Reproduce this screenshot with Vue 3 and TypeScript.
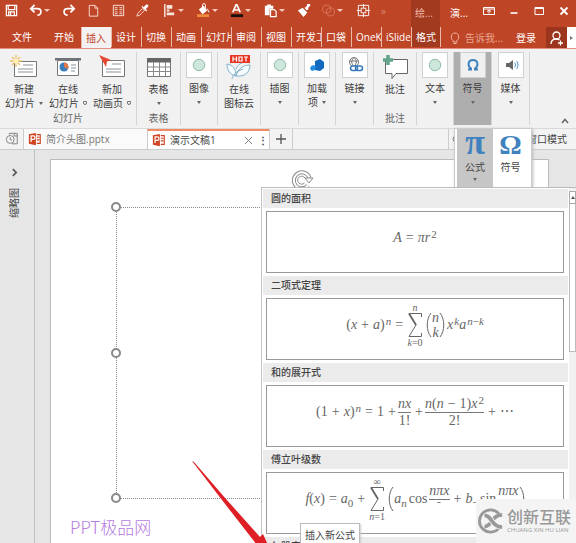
<script setup lang="ts">
interface QuickAction {
  icon: string
  label: string
  width: number
  caret?: boolean
}

interface RibbonButton {
  icon: string
  lines: string[]
  mark?: 'solid' | 'hollow'
  boxed?: boolean
}

interface RibbonGroup {
  width: number
  label?: string
  active?: boolean
  buttons: RibbonButton[]
}

const quickActions: QuickAction[] = [
  { icon: 'save', label: '保存', width: 23 },
  { icon: 'undo', label: '撤消', width: 34, caret: true },
  { icon: 'redo', label: '恢复', width: 24 },
  { icon: 'page', label: '新建', width: 25 },
  { icon: 'grid', label: '网格', width: 24 },
  { icon: 'dropper', label: '取色器', width: 27 },
  { icon: 'align', label: '对齐', width: 34, caret: true },
  { icon: 'fill', label: '填充', width: 33, caret: true },
  { icon: 'font', label: '字体颜色', width: 34, caret: true },
  { icon: 'paste', label: '粘贴', width: 34, caret: true },
  { icon: 'brush', label: '格式刷', width: 24 },
  { icon: 'merge', label: '合并形状', width: 35, caret: true },
  { icon: 'select', label: '选择', width: 24 },
]

const tabs = ['插入', '设计', '切换', '动画', '幻灯片', '审阅', '视图', '开发工', '口袋', 'OneKey', 'iSlide']

const groups: RibbonGroup[] = [
  {
    width: 137,
    label: '幻灯片',
    buttons: [
      { icon: 'new-slide', lines: ['新建', '幻灯片'], mark: 'solid' },
      { icon: 'online-slide', lines: ['在线', '幻灯片'], mark: 'hollow' },
      { icon: 'anim-slide', lines: ['新加', '动画页'], mark: 'hollow' },
    ],
  },
  { width: 44, label: '表格', buttons: [{ icon: 'table', lines: ['表格', ''], mark: 'solid' }] },
  { width: 37, buttons: [{ icon: 'dot', lines: ['图像', ''], mark: 'solid', boxed: true }] },
  { width: 43, buttons: [{ icon: 'hot-leaf', lines: ['在线', '图标云'] }] },
  { width: 38, buttons: [{ icon: 'dot', lines: ['插图', ''], mark: 'solid', boxed: true }] },
  { width: 37, buttons: [{ icon: 'addin', lines: ['加载', '项'], mark: 'solid', boxed: true }] },
  { width: 38, buttons: [{ icon: 'link', lines: ['链接', ''], mark: 'solid', boxed: true }] },
  { width: 43, label: '批注', buttons: [{ icon: 'comment', lines: ['批注', ''] }] },
  { width: 37, buttons: [{ icon: 'dot', lines: ['文本', ''], mark: 'solid', boxed: true }] },
  { width: 38, active: true, buttons: [{ icon: 'omega', lines: ['符号', ''], mark: 'solid', boxed: true }] },
  { width: 38, buttons: [{ icon: 'media', lines: ['媒体', ''], mark: 'solid', boxed: true }] },
]
</script>

<template>
  <div class="app">
    <svg class="sprite" aria-hidden="true">
      <symbol id="save" viewBox="0 0 16 16"><path d="M2.500 2.500h11v11h-11z M4.500 3v4h7V3 M5 13v-3.500h6V13 M7 10v3" fill="none" stroke="#fff" stroke-width="1.300" /></symbol>
      <symbol id="undo" viewBox="0 0 16 16"><path d="M7 2 3 6l4 4M3.500 6H10c5 0 5 7 0 7" fill="none" stroke="#fff" stroke-width="1.900" /></symbol>
      <symbol id="redo" viewBox="0 0 16 16"><path d="M9 2l4 4-4 4M12.500 6H6c-5 0-5 7 0 7" fill="none" stroke="#fff" stroke-width="1.900" /></symbol>
      <symbol id="page" viewBox="0 0 16 16"><path d="M3.500 2.500h6l3 3v8.500h-9zM9.500 2.500v3h3" fill="none" stroke="#f6ddd4" /></symbol>
      <symbol id="grid" viewBox="0 0 16 16"><path d="M2.500 2.500h11v11h-11z" fill="none" stroke="#f9e5de" /><path d="M4 5h3M9 5h3M4 7h3M9 7h3M4 9.500h3M9 9.500h3M4 11.500h3M9 11.500h3" stroke="#f6ddd4" /></symbol>
      <symbol id="dropper" viewBox="0 0 16 16"><path d="M2 14l1-3 5-5 2 2-5 5z" fill="none" stroke="#f6ddd4" /><path d="M7 4l5 5 1-1-1.500-1.500L14 4c1-2-1-3-2.500-2L9 4.500 8 3z" fill="#fff" /></symbol>
      <symbol id="align" viewBox="0 0 16 16"><path d="M3 1v14" stroke="#fff" stroke-width="1.300" /><path d="M5 2h6v4H5zM5 7h3v2H5zM5 10h8v3H5z" fill="#f8e4dc" /></symbol>
      <symbol id="fill" viewBox="0 0 16 16"><path d="M3 7l5-4 4 5-5 4z" fill="#fff" /><path d="M7 5V2c0-2 3-2 3 0v4M12 6l2 4" stroke="#fff" fill="none" /><path d="M1 12h13v3H1z" fill="#ee8a3a" /></symbol>
      <symbol id="font" viewBox="0 0 16 16"><path d="M4 10 7.500 2h1L12 10M5.500 7.500h5" fill="none" stroke="#fff" stroke-width="1.700" /><path d="M2 12h13v3H2z" fill="#17110f" /></symbol>
      <symbol id="paste" viewBox="0 0 16 16"><path d="M2 3h9v3H7v7H2zM4.500 1.500h4v2h-4z" fill="#fff" /><path d="M8 7h4l2 2v5.500H8z" fill="#c0472a" stroke="#fff" stroke-width="1.300" /></symbol>
      <symbol id="brush" viewBox="0 0 16 16"><path d="M1 8l5-3 5 5-4 5zM8 5l2-1 1-3 3 0 0 2-2 2 0 2-2 1z" fill="#fff" /><path d="M6 4l6 6" stroke="#c0472a" /></symbol>
      <symbol id="merge" viewBox="0 0 16 16"><circle cx="6" cy="6.500" r="4.300" fill="none" stroke="#d9775f" /><circle cx="10" cy="9.500" r="4.300" fill="none" stroke="#d9775f" /></symbol>
      <symbol id="select" viewBox="0 0 16 16"><path d="M2.500 2.500h11v11h-11zM5.500 5.500h5v5h-5zM8 1v4M8 11v4M1 8h4M11 8h4" fill="none" stroke="#fff" /></symbol>

      <symbol id="new-slide" viewBox="0 0 28 24"><path d="M4.500 6.500h22v15h-22z" fill="#fff" stroke="#777" /><path d="M13 10h10M8 14h15M8 17h15" stroke="#c5c9cc" stroke-width="2" /><path d="M6 0v12M0 6h12M2 2l8 8M10 2l-8 8" stroke="#efc26b" stroke-width="1.300" /><circle cx="6" cy="6" r="2.500" fill="#fff0b5" /></symbol>
      <symbol id="online-slide" viewBox="0 0 28 24"><path d="M3.500 5.500h21v15h-21z" fill="#fff" stroke="#777" /><path d="M1 3h26v2.500H1z" fill="#6f7478" /><circle cx="10" cy="12" r="4.500" fill="#3b7dbd" /><path d="M10 12V7.500a4.500 4.500 0 0 1 4 6.500z" fill="#e57845" /><path d="M17 10h5M17 13h5M17 16h4" stroke="#adb5bb" stroke-width="1.500" /></symbol>
      <symbol id="anim-slide" viewBox="0 0 28 24"><path d="M4.500 5.500h22v16h-22z" fill="#fff" stroke="#777" /><path d="M14 9h9M8 14h15M8 17h15" stroke="#c5c9cc" stroke-width="2" /><path d="M1 0l12 5-4 1.500L8 12z" fill="#e54932" /></symbol>
      <symbol id="table" viewBox="0 0 28 24"><path d="M2.500 3.500h23v18h-23z" fill="#fff" stroke="#777" /><path d="M2 3h24v4.500H2z" fill="#666" /><path d="M8.500 7v14M14.500 7v14M20.500 7v14M3 12h22M3 16.500h22" stroke="#888" /></symbol>
      <symbol id="dot" viewBox="0 0 24 24"><circle cx="12" cy="12" r="5.700" fill="#cde8da" stroke="#91b9aa" /></symbol>
      <symbol id="hot-leaf" viewBox="0 0 28 26"><path d="M2 10c0 6 3 11 9 12 9 1 14-4 14-11-6 0-12 3-14 11C11 15 8 11 2 10zM7 25c1-5 5-8 11-10M11 15c1-3 3-5 6-6" fill="#f7fcff" stroke="#83b1ca" /><path d="M5 1h20v8H5z" fill="#e73524" /><path d="M8 2.500v5M11.500 2.500v5M8 5h3.500M14 3h3v4h-3zM19 3h4M21 3v4.500" fill="none" stroke="#fff" stroke-width="1.200" /></symbol>
      <symbol id="addin" viewBox="0 0 24 24"><path d="M10 8l5-2 4 3v6l-4 3-5-1z" fill="#1269be" /><path d="M6 13l3-1 2 2-1 3-3 1-2-2z" fill="#238be0" /></symbol>
      <symbol id="link" viewBox="0 0 24 24"><circle cx="11" cy="9" r="4.500" fill="none" stroke="#777" /><path d="M7 8h8M11 4.500c-3 3-3 6 0 9 3-3 3-6 0-9" fill="none" stroke="#777" /><rect x="7.500" y="13" width="7" height="4.500" rx="2.200" fill="#fff" stroke="#3478b9" stroke-width="1.500" /><rect x="12.500" y="13" width="7" height="4.500" rx="2.200" fill="none" stroke="#3478b9" stroke-width="1.500" /></symbol>
      <symbol id="comment" viewBox="0 0 28 26"><path d="M4.500 5.500h22v14H15l-4 5v-5H4.500z" fill="#fff" stroke="#666" /><path d="M7 1v10M2 6h10" stroke="#61a489" stroke-width="3.500" /></symbol>
      <symbol id="omega" viewBox="0 0 24 24"><path d="M7 16.500h3v-1C6 12.500 7 7 12 7s6 5.500 2 8.500v1h3" fill="none" stroke="#3b80bb" stroke-width="1.900" /></symbol>
      <symbol id="media" viewBox="0 0 24 24"><path d="M7 10h3l4-3v10l-4-3H7z" fill="#666" /><path d="M15.500 9.500c1.300 1.500 1.300 3.500 0 5M17.500 8c2 2.500 2 5.500 0 8" fill="none" stroke="#4d8fc7" /></symbol>

      <symbol id="ppt" viewBox="0 0 16 16"><path d="M1 2.500 9 1v14l-8-1.500z" fill="#d04423" /><path d="M10 3h4v10h-4M10 6h3M10 9h3" fill="none" stroke="#d04423" stroke-width="1.300" /><path d="M3.500 11.500v-7H6a2 2 0 0 1 0 4H3.500" fill="none" stroke="#fff" stroke-width="1.400" /></symbol>
      <symbol id="sigma" viewBox="0 0 16 26"><path d="M14.500 5V1.500H2L9 13 2 24.500h12.500V21" fill="none" stroke="#666" /><path d="M2 1.500 9 13" stroke="#666" stroke-width="1.800" /></symbol>
    </svg>

    <header class="title-area">
      <div class="title-row">
        <div class="quick">
          <button v-for="action in quickActions" :key="action.icon" class="quick-button" :style="{ width: action.width + 'px' }" :aria-label="action.label">
            <svg class="quick-icon"><use :href="'#' + action.icon" /></svg>
            <i v-if="action.caret" class="caret light"></i>
          </button>
          <span class="more">»</span>
        </div>
        <span class="context-title">绘...</span>
        <span class="doc-title">演...</span>
        <div class="window-buttons">
          <button aria-label="功能区显示选项"><svg viewBox="0 0 12 12"><path d="M.5 2.500h11v7H.5zM.5 4h11M6 8.500V5M4 6.500l2-1.500 2 1.500" /></svg></button>
          <button aria-label="最小化"><svg viewBox="0 0 12 12"><path d="M2.500 8h7" stroke-width="1.600" /></svg></button>
          <button aria-label="最大化"><svg viewBox="0 0 12 12"><path d="M2 2.500h8.500v7H2zM2 3.500h8.500" /></svg></button>
          <button aria-label="关闭"><svg viewBox="0 0 12 12"><path d="M2.500 2.500l7 7M9.500 2.500l-7 7" stroke-width="1.800" /></svg></button>
        </div>
      </div>
      <nav class="tabs">
        <button class="tab file">文件</button>
        <button class="tab home">开始</button>
        <button v-for="(tab, i) in tabs" :key="tab" class="tab" :class="{ selected: i === 0 }">{{ tab }}</button>
        <button class="tab context">格式</button>
        <label class="tell-me">
          <svg viewBox="0 0 12 14"><path d="M4 9.500C1 7 2 2 6 2s5 5 2 7.500v1.500H4zM4.500 12.500h3" /></svg>
          <input type="text" placeholder="告诉我..." />
        </label>
        <a class="login" href="#login">登录</a>
        <button class="share" aria-label="共享"><svg viewBox="0 0 16 16"><circle cx="7.500" cy="5.500" r="3.500" /><path d="M2 14c0-3 2-5 5.500-5 1.500 0 2.500.500 3 1M9 13h5M11.500 10.500v5" /></svg></button>
        <button class="scroll-right" aria-label="向右滚动"><i></i></button>
      </nav>
    </header>

    <section class="ribbon">
      <div v-for="(group, g) in groups" :key="g" class="group" :class="{ active: group.active }" :style="{ width: group.width + 'px' }">
        <div class="group-buttons">
          <button v-for="button in group.buttons" :key="button.lines[0]" class="ribbon-button" :class="{ boxed: button.boxed }">
            <svg class="ribbon-icon"><use :href="'#' + button.icon" /></svg>
            <span class="line">{{ button.lines[0] }}</span>
            <span class="line"><span v-if="button.lines[1]">{{ button.lines[1] }}</span><i v-if="button.mark" class="caret" :class="button.mark"></i></span>
          </button>
        </div>
        <span v-if="group.label" class="group-label">{{ group.label }}</span>
      </div>
      <button class="collapse" aria-label="折叠功能区"><svg viewBox="0 0 10 8"><path d="M2 6l3-3.500L8 6" /></svg></button>
    </section>

    <section class="doc-bar">
      <button class="history" aria-label="历史"><svg viewBox="0 0 16 16"><path d="M5 3V1.500h9v12H8M10.500 1.500v3H14" /><circle cx="6" cy="8.500" r="4.500" /><path d="M6 6v3h2" /></svg></button>
      <div class="doc-tab"><svg class="ppt"><use href="#ppt" /></svg><span>简介头图.pptx</span></div>
      <div class="doc-tab current">
        <svg class="ppt"><use href="#ppt" /></svg><span>演示文稿1</span>
        <button class="close" aria-label="关闭文档"><svg viewBox="0 0 10 10"><path d="M1 1l8 8M9 1l-8 8" /></svg></button>
        <button class="dots" aria-label="更多">⋮</button>
      </div>
      <button class="add" aria-label="新建文档"><svg viewBox="0 0 12 12"><path d="M6 1v10M1 6h10" /></svg></button>
      <div class="modes"><svg viewBox="0 0 8 8"><circle cx="4" cy="4" r="3" /></svg><span>窗口模式</span></div>
    </section>

    <main class="workspace">
      <aside class="thumbs">
        <button aria-label="展开缩略图"><svg viewBox="0 0 8 8"><path d="M2.500 1l3 3-3 3" /></svg></button>
        <span>缩略图</span>
      </aside>
      <div class="slide">
        <div class="placeholder">
          <i class="handle top"></i><i class="handle middle"></i><i class="handle bottom"></i>
          <svg class="rotate" viewBox="0 0 24 22"><path d="M17 16.500A8 8 0 1 1 18.500 9" stroke="#8c8c8c" stroke-width="4" /><path d="M17 16.500A8 8 0 1 1 18.500 9" stroke="#fff" stroke-width="2" /><path d="M14 9h8l-4 5z" fill="#fff" stroke="#8c8c8c" /><path d="M13.500 14A4 4 0 1 1 14 9" stroke="#8c8c8c" /></svg>
        </div>
        <p class="brand">PPT极品网</p>
      </div>
    </main>

    <div class="symbol-menu">
      <button class="symbol-item open"><b>π</b><span>公式</span><i class="caret solid"></i></button>
      <button class="symbol-item"><b>Ω</b><span>符号</span></button>
    </div>

    <div class="gallery">
      <div class="gallery-list">
        <section class="entry">
          <h2>圆的面积</h2>
          <button class="formula"><span class="math"><em>A</em><span class="op">=</span><em>πr</em><sup>2</sup></span></button>
        </section>
        <section class="entry">
          <h2>二项式定理</h2>
          <button class="formula"><span class="math">(<em>x</em><span class="op">+</span><em>a</em>)<sup><em>n</em></sup><span class="op">=</span>
            <span class="sum"><small><em>n</em></small><svg><use href="#sigma" /></svg><small><em>k</em>=0</small></span>
            <svg class="paren" viewBox="0 0 6 26"><path d="M5 1C0 7 0 19 5 25" /></svg>
            <span class="binom"><em>n</em><em>k</em></span>
            <svg class="paren" viewBox="0 0 6 26"><path d="M1 1c5 6 5 18 0 24" /></svg>
            <em class="after">x</em><sup><em>k</em></sup><em>a</em><sup><em>n</em>−<em>k</em></sup></span></button>
        </section>
        <section class="entry">
          <h2>和的展开式</h2>
          <button class="formula"><span class="math">(1<span class="op">+</span><em>x</em>)<sup><em>n</em></sup><span class="op">=</span>1<span class="op tight">+</span>
            <span class="frac"><span><em>nx</em></span><span>1!</span></span><span class="op tight">+</span>
            <span class="frac"><span><em>n</em>(<em>n</em><span class="op">−</span>1)<em>x</em><sup>2</sup></span><span>2!</span></span><span class="op">+</span>⋯</span></button>
        </section>
        <section class="entry">
          <h2>傅立叶级数</h2>
          <button class="formula"><span class="math"><em>f</em>(<em>x</em>)<span class="op">=</span><em>a</em><sub>0</sub><span class="op">+</span>
            <span class="sum"><small>∞</small><svg><use href="#sigma" /></svg><small><em>n</em>=1</small></span>
            <svg class="paren" viewBox="0 0 6 26"><path d="M5 1C0 7 0 19 5 25" /></svg>
            <em>a</em><sub><em>n</em></sub><span class="func">cos</span>
            <span class="frac"><span><em>nπx</em></span><span><em>L</em></span></span><span class="op">+</span><em>b</em><sub><em>n</em></sub><span class="func">sin</span>
            <span class="frac"><span><em>nπx</em></span><span><em>L</em></span></span>
            <svg class="paren" viewBox="0 0 6 26"><path d="M1 1c5 6 5 18 0 24" /></svg></span></button>
        </section>
        <section class="entry"><h2>勾股定理</h2></section>
      </div>
      <div class="scrollbar"><button aria-label="向上滚动"><i></i></button><div class="thumb"></div></div>
    </div>

    <svg class="pointer" viewBox="0 0 80 84" aria-hidden="true"><path d="M0 0 2 1 34 38 68 76 71 73 76 84H65L30 39z" fill="#df1f26" /></svg>
    <div class="tooltip" role="tooltip">插入新公式</div>
    <div class="fade-patch"></div>
    <div class="watermark">
      <svg viewBox="0 0 28 28"><path d="M22.500 6A12 12 0 1 0 22.500 22" stroke="#989898" stroke-width="3" /><path d="M26 7.500C20 7.500 17 11 15 14s-4 6-8 6" stroke="#989898" stroke-width="4" /><path d="M7 8c4 0 6 3 8 6s5 6.500 11 6.500" stroke="#f4f4f4" stroke-width="6" /><path d="M7 8c4 0 6 3 8 6s5 6.500 11 6.500" stroke="#989898" stroke-width="4" /></svg>
      <div><strong>创新互联</strong><small>CHUANG XIN HU LIAN</small></div>
    </div>
  </div>
</template>

<style>
html, body { margin: 0; overflow: hidden; }
</style>

<style scoped>
.app { position: relative; display: flex; flex-direction: column; min-height: 100vh; overflow: hidden; background: #e6e6e6; color: #444; font-family: "Open Sans", "Noto Sans CJK SC", sans-serif; font-size: 10px; line-height: 14px; }
.app * { box-sizing: border-box; }
button { display: flex; align-items: center; justify-content: center; flex: none; margin: 0; padding: 0; border: 0; background: none; color: inherit; font: inherit; white-space: nowrap; }
svg { display: block; flex: none; fill: none; }
.sprite { position: absolute; width: 0; height: 0; }
.caret { display: inline-block; flex: none; width: 0; height: 0; border: 2px solid transparent; border-top: 3px solid #666; border-bottom: 0; }
.caret.light { border-top-color: #f2c9bb; border-left-width: 3px; border-right-width: 3px; }
.line span + .caret { margin-left: 4px; }
.caret.hollow { width: 4px; height: 4px; border: 1px solid #777; border-radius: 0 0 2px 2px; }

.title-area { background: #bf4527; color: #fff; }
.title-row { display: flex; height: 27px; }
.quick { display: flex; flex: 1; align-items: center; height: 21px; overflow: hidden; }
.quick-button { justify-content: flex-start; gap: 1px; padding-left: 4px; }
.quick-button + .quick-button { padding-left: 5px; }
.quick-icon { width: 15px; height: 15px; }
.more { padding-left: 6px; color: #d98671; }
.context-title { width: 29px; padding: 6px 0 0 4px; background: #a23a20; color: #f0bba9; }
.doc-title { width: 36px; padding: 6px 0 0 10px; }
.window-buttons { display: flex; height: 21px; }
.window-buttons button { width: 25px; }
.window-buttons svg { width: 12px; height: 12px; stroke: #fff; }
.tabs { display: flex; height: 21px; }
.tab { justify-content: flex-start; width: 30px; height: 20px; padding-left: 4px; overflow: hidden; border-left: 1px solid #eab8a8; }
.tab.file { width: 47px; padding-left: 12px; border: 0; }
.tab.home { width: 34px; padding-left: 7px; border: 0; }
.tab.selected { height: 21px; background: #f3f1f1; color: #bf4527; }
.tab.context { background: #a23a20; border-right: 1px solid #eab8a8; }
.tell-me { display: flex; flex: 1; align-items: center; min-width: 0; padding-left: 8px; gap: 4px; }
.tell-me svg { width: 12px; height: 14px; stroke: #efb5a2; }
.tell-me input { flex: 1; min-width: 0; padding: 0; border: 0; background: none; color: #fff; font: inherit; }
.tell-me input::placeholder { color: #e9a48f; opacity: 1; }
.login { display: flex; align-items: center; width: 30px; color: #fff; text-decoration: none; }
.share { width: 21px; background: #9b351d; }
.share svg { width: 16px; height: 16px; stroke: #fff; stroke-width: 1.3; }
.scroll-right { width: 9px; background: #fff; }
.scroll-right i { border: 2px solid transparent; border-left: 3px solid #777; border-right: 0; }

.ribbon { display: flex; height: 80px; padding-top: 3px; border-top: 1px solid #e4907c; background: #f1f1f1; }
.group { display: flex; flex: none; flex-direction: column; align-items: center; height: 73px; border-right: 1px solid #d4d4d4; }
.group.active { background: #aeaeae; }
.group-buttons { display: flex; width: 100%; height: 60px; justify-content: center; gap: 6px; }
.ribbon-button { flex-direction: column; justify-content: flex-start; padding-top: 2px; color: #3d3d3d; }
.ribbon-icon { width: 28px; height: 26px; margin-bottom: 2px; }
.line { display: flex; align-items: center; height: 14px; }
.boxed { padding-top: 0; }
.boxed .ribbon-icon { width: 26px; height: 26px; margin-bottom: 3px; border: 1px solid #d0d0d0; background: #fff; }
.active .ribbon-icon { background: #f0f0f0; }
.group-label { color: #666; }
.collapse { align-self: flex-end; width: 12px; height: 14px; margin-left: auto; margin-right: 5px; }
.collapse svg { width: 10px; height: 8px; stroke: #666; stroke-width: 1.5; }

.doc-bar { display: flex; height: 22px; border-top: 1px solid #d9d9d9; border-bottom: 1px solid #c9ccd0; background: #f3f3f3; }
.history { width: 23px; }
.history svg { width: 14px; height: 14px; stroke: #777; }
.doc-tab { display: flex; align-items: center; width: 124px; padding-left: 4px; gap: 4px; border-left: 1px solid #ccc; background: #fafafa; color: #777; }
.doc-tab.current { width: 122px; border-top: 2px solid #ef8a62; background: #fff; color: #444; }
.doc-tab span { flex: 1; white-space: nowrap; }
.ppt { width: 14px; height: 14px; }
.close svg { width: 9px; height: 9px; stroke: #777; }
.dots { width: 12px; font-weight: bold; }
.add { width: 24px; border-left: 1px solid #ccc; border-right: 1px solid #ccc; }
.add svg { width: 12px; height: 12px; stroke: #555; stroke-width: 1.3; }
.modes { display: flex; align-items: center; justify-content: space-between; width: 128px; margin-left: auto; padding: 0 9px 0 3px; border-left: 1px solid #ccc; }
.modes svg { width: 8px; height: 8px; stroke: #777; }

.workspace { display: flex; flex: 1; }
.thumbs { display: flex; flex-direction: column; align-items: center; width: 35px; padding: 16px 6px 0 0; gap: 10px; border-right: 1px solid #bcc0c4; }
.thumbs svg { width: 9px; height: 9px; stroke: #555; stroke-width: 1.5; }
.thumbs button { height: 12px; }
.thumbs span { writing-mode: vertical-rl; text-orientation: sideways; transform: rotate(180deg); }
.slide { position: relative; flex: 1; margin: 9px 27px 0 15px; padding: 47px 60px 0 65px; border: 1px solid #b8bcc0; border-bottom: 0; background: #fff; }
.placeholder { position: relative; height: 292px; border: 1px dotted #8a8a8a; }
.handle { position: absolute; left: -6px; width: 10px; height: 10px; border: 2px solid #888; border-radius: 50%; background: #fff; }
.handle.top { top: -6px; }
.handle.middle { top: 140px; }
.handle.bottom { bottom: -5px; }
.rotate { position: absolute; top: -39px; left: 174px; width: 24px; height: 22px; }
.brand { margin: 16px 0 0 -46px; color: #b57be0; font-family: "Noto Sans CJK SC", sans-serif; font-size: 17px; font-weight: 300; line-height: 24px; }

.symbol-menu { position: absolute; top: 128px; right: 44px; display: flex; height: 60px; padding: 0 3px 0 2px; border: 1px solid #ccc; background: #fff; box-shadow: 1px 1px 3px #bbb; }
.symbol-item { flex-direction: column; justify-content: flex-start; width: 35px; padding-top: 1px; }
.symbol-item.open { width: 36px; background: #c6c6c6; }
.symbol-item b { height: 30px; color: #3f82bd; font: bold 28px/30px "Liberation Serif", serif; }
.symbol-item.open b { font-size: 36px; line-height: 24px; }
.symbol-item .caret { margin-top: 4px; }

.gallery { position: absolute; top: 187px; right: 0; bottom: 0; left: 261px; display: flex; overflow: hidden; border-top: 1px solid #bbb; border-left: 1px solid #c4c4c4; background: #fff; }
.gallery-list { flex: 1; padding: 1px 1px 0; }
.entry { padding-bottom: 3px; }
h2 { height: 19px; margin: 0 0 3px; padding-left: 8px; background: #ebebeb; color: #444; font-size: 10px; font-weight: 500; line-height: 19px; }
.formula { width: calc(100% - 7px); height: 62px; margin-left: 3px; padding-bottom: 8px; border: 1px solid #999; background: #fff; }
.math { display: flex; align-items: center; color: #666; font-family: "Liberation Serif", serif; font-size: 14px; line-height: 14px; }
.math sup, .math sub { font-size: 11px; line-height: 10px; }
.math sup { padding-bottom: 8px; padding-left: 1px; }
.math sub { padding-top: 7px; }
.op { margin: 0 4px; }
.op.tight { margin-right: 2px; }
.func { margin: 0 2px; }
.sum { display: flex; flex-direction: column; align-items: center; margin-right: 3px; }
.sum svg { width: 16px; height: 26px; }
.sum small { font-size: 10px; line-height: 9px; }
.paren { width: 6px; height: 26px; stroke: #666; }
.binom { display: flex; flex-direction: column; align-items: center; line-height: 15px; }
.after { margin-left: 2px; }
.frac { display: flex; flex-direction: column; align-items: stretch; }
.frac > span { display: flex; align-items: center; justify-content: center; height: 17px; }
.frac > span + span { border-top: 1px solid #777; }

.scrollbar { display: flex; flex-direction: column; width: 7px; padding-top: 3px; background: #f1f1f1; }
.scrollbar button { width: 7px; height: 13px; border: 1px solid #aaa; background: #fff; }
.scrollbar i { border: 2px solid transparent; border-top: 0; border-bottom: 3px solid #555; }
.thumb { height: 148px; border: 1px solid #bbb; border-top: 0; background: #fff; }

.pointer { position: absolute; top: 461px; left: 192px; width: 80px; height: 84px; }
.tooltip { position: absolute; top: 523px; left: 300px; height: 24px; padding: 4px 4px; border: 1px solid #bbb; background: #fff; box-shadow: 1px 1px 2px #ccc; }
.fade-patch { position: absolute; right: 100px; bottom: 28px; width: 48px; height: 12px; background: #fff; }
.watermark { position: absolute; right: 0; bottom: 0; display: flex; align-items: center; width: 100px; height: 44px; padding-left: 2px; gap: 3px; background: #f4f4f4; color: #989898; white-space: nowrap; }
.watermark svg { width: 26px; height: 26px; }
.watermark div { display: flex; flex-direction: column; }
.watermark strong { font-size: 16px; font-weight: 500; line-height: 19px; }
.watermark small { font-size: 6px; line-height: 7px; }
</style>
